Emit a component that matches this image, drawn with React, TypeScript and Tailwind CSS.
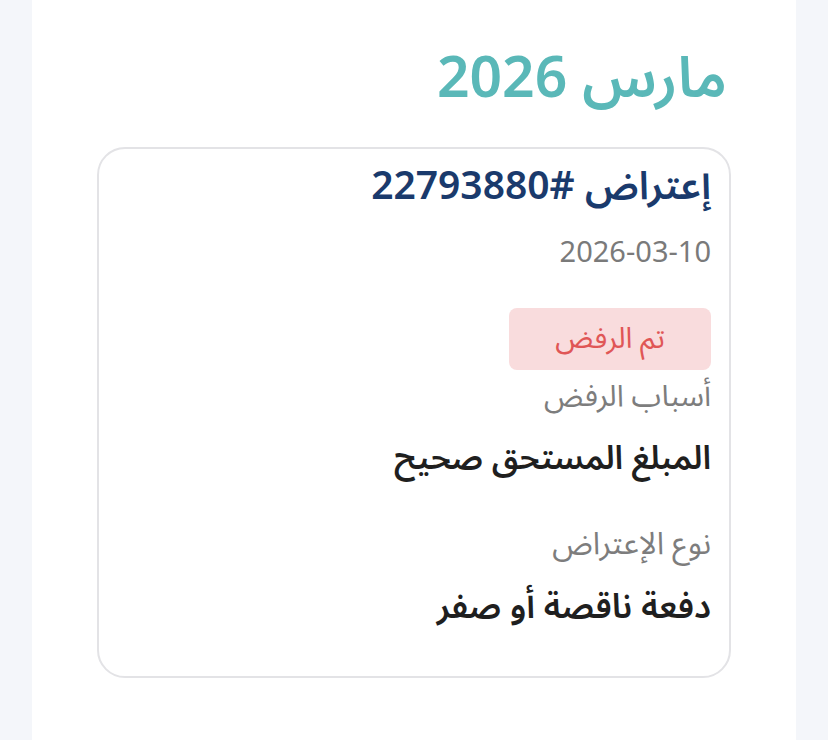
export default function App() {
  return (
    <div
      dir="rtl"
      className="min-h-[740px] bg-[#f4f6fa] px-8"
      style={{ fontFamily: '"Noto Sans Arabic", "Noto Sans", "DejaVu Sans", sans-serif' }}
    >
      <div className="min-h-[740px] bg-white px-[65px] pt-[45px]">
        {/* Month header */}
        <h1 className="pr-[4px] text-[57px] font-semibold leading-[68px] text-[#5ab8b8]">مارس 2026</h1>

        {/* Objection card */}
        <div className="mt-[34px] rounded-[28px] border-2 border-[#e3e3e6] px-[18px] pt-[12px] pb-[46px]">
          <h2 className="text-[39px] font-semibold leading-[52px] text-[#1a3a6c]">إعتراض #22793880</h2>
          <p className="mt-[20px] text-[29px] leading-[40px] text-[#7a7a7a]">2026-03-10</p>

          <div className="mt-[35px] flex">
            <span className="flex h-[62px] w-[202px] items-center justify-center rounded-[8px] bg-[#f9dcdd] text-[29px] leading-[36px] text-[#e05656]">
              تم الرفض
            </span>
          </div>

          <p className="mt-[10px] text-[30px] leading-[34px] text-[#7d7d7d]">أسباب الرفض</p>
          <p className="mt-[22px] text-[33px] font-semibold leading-[46px] text-[#1f1f1f]">المبلغ المستحق صحيح</p>

          <p className="mt-[40px] text-[31px] leading-[44px] text-[#7d7d7d]">نوع الإعتراض</p>
          <p className="mt-[18px] text-[34px] font-semibold leading-[46px] text-[#1f1f1f]">دفعة ناقصة أو صفر</p>
        </div>
      </div>
    </div>
  );
}
